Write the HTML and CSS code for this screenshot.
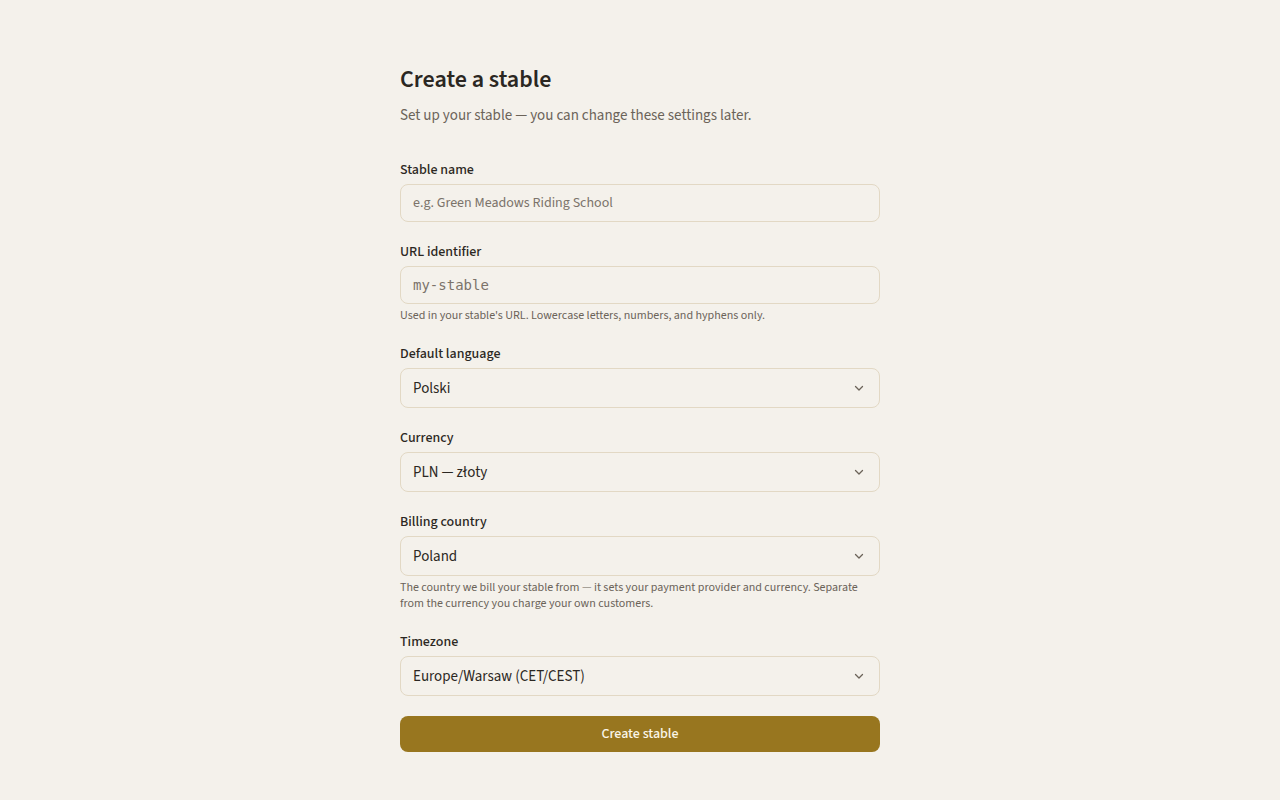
FILE: index.html
```html
<!DOCTYPE html>
<html lang="en">
<head>
  <meta charset="UTF-8">
  <meta name="viewport" content="width=device-width, initial-scale=1.0">
  <title>Create a stable</title>
  <link rel="stylesheet" href="styles.css">
</head>
<body>
  <main class="page">
    <h1 class="title">Create a stable</h1>
    <p class="subtitle">Set up your stable — you can change these settings later.</p>

    <form class="form">
      <div class="field">
        <label for="name">Stable name</label>
        <input id="name" class="control" type="text" placeholder="e.g. Green Meadows Riding School">
      </div>

      <div class="field">
        <label for="slug">URL identifier</label>
        <input id="slug" class="control mono" type="text" placeholder="my-stable">
        <p class="hint">Used in your stable's URL. Lowercase letters, numbers, and hyphens only.</p>
      </div>

      <div class="field">
        <label for="lang">Default language</label>
        <div class="select-wrap">
          <select id="lang" class="control select">
            <option>Polski</option>
            <option>English</option>
          </select>
          <svg class="chevron" width="12" height="12" viewBox="0 0 12 12"><path d="M2.5 4.5 6 8l3.5-3.5" fill="none" stroke="currentColor" stroke-width="1.3" stroke-linecap="round" stroke-linejoin="round"/></svg>
        </div>
      </div>

      <div class="field">
        <label for="currency">Currency</label>
        <div class="select-wrap">
          <select id="currency" class="control select">
            <option>PLN — złoty</option>
            <option>EUR — euro</option>
          </select>
          <svg class="chevron" width="12" height="12" viewBox="0 0 12 12"><path d="M2.5 4.5 6 8l3.5-3.5" fill="none" stroke="currentColor" stroke-width="1.3" stroke-linecap="round" stroke-linejoin="round"/></svg>
        </div>
      </div>

      <div class="field">
        <label for="country">Billing country</label>
        <div class="select-wrap">
          <select id="country" class="control select">
            <option>Poland</option>
            <option>Germany</option>
          </select>
          <svg class="chevron" width="12" height="12" viewBox="0 0 12 12"><path d="M2.5 4.5 6 8l3.5-3.5" fill="none" stroke="currentColor" stroke-width="1.3" stroke-linecap="round" stroke-linejoin="round"/></svg>
        </div>
        <p class="hint">The country we bill your stable from — it sets your payment provider and currency. Separate from the currency you charge your own customers.</p>
      </div>

      <div class="field">
        <label for="tz">Timezone</label>
        <div class="select-wrap">
          <select id="tz" class="control select">
            <option>Europe/Warsaw (CET/CEST)</option>
            <option>Europe/Berlin (CET/CEST)</option>
          </select>
          <svg class="chevron" width="12" height="12" viewBox="0 0 12 12"><path d="M2.5 4.5 6 8l3.5-3.5" fill="none" stroke="currentColor" stroke-width="1.3" stroke-linecap="round" stroke-linejoin="round"/></svg>
        </div>
      </div>

      <button type="button" class="submit">Create stable</button>
    </form>
  </main>
</body>
</html>
```

FILE: styles.css
```css
body {
  margin: 0;
  background-color: #f4f1eb;
  color: #2b2722;
  font-family: "Source Sans 3", "Source Sans Pro", Lato, "Noto Sans", sans-serif;
}
.page {
  width: 480px;
  margin: 0 auto;
  padding-top: 64px;
}
.title {
  margin: 0;
  font-size: 24px;
  line-height: 32px;
  font-weight: 600;
  color: #2b2722;
}
.subtitle {
  margin: 9px 0 0;
  font-size: 15px;
  line-height: 22px;
  color: #6b6359;
}
.form {
  margin-top: 33px;
  display: flex;
  flex-direction: column;
  gap: 20px;
}
.field {
  display: flex;
  flex-direction: column;
}
.field label {
  font-size: 14px;
  line-height: 20px;
  font-weight: 500;
  color: #2b2722;
  margin-bottom: 4px;
}
.control {
  box-sizing: border-box;
  width: 100%;
  height: 38px;
  padding: 0 12px;
  border: 1px solid #e2d8c4;
  border-radius: 8px;
  background: #f4f1eb;
  font-family: inherit;
  font-size: 14px;
  color: #2b2722;
  outline: none;
}
.control::placeholder {
  color: #7b736a;
}
.mono {
  font-family: "DejaVu Sans Mono", monospace;
  font-size: 14px;
}
.select-wrap {
  position: relative;
}
.select {
  height: 40px;
  appearance: none;
  -webkit-appearance: none;
  font-size: 15px;
}
.chevron {
  position: absolute;
  right: 15px;
  top: 14px;
  color: #6b6359;
  pointer-events: none;
}
.hint {
  margin: 4px 0 0;
  font-size: 12px;
  line-height: 16px;
  color: #6b6359;
}
.submit {
  height: 36px;
  border: none;
  border-radius: 8px;
  background-color: #98761f;
  color: #fbf6ea;
  font-family: inherit;
  font-size: 14px;
  font-weight: 500;
  cursor: pointer;
}
```
